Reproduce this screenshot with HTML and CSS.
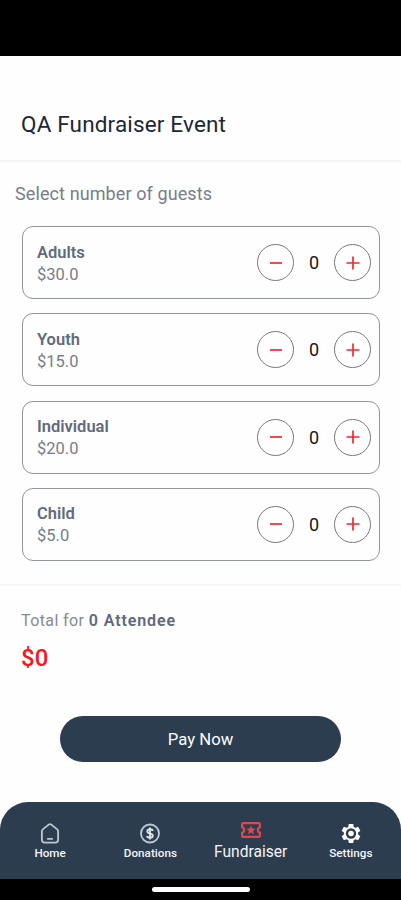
FILE: index.html
```html
<!DOCTYPE html>
<html lang="en">
<head>
    <meta charset="UTF-8">
    <meta name="viewport" content="width=device-width, initial-scale=1.0">
    <title>QA Fundraiser Event</title>
    <link rel="stylesheet" href="styles.css">
</head>

<body>
    <div class="status-bar"></div>
    <header class="header">
        <h1>QA Fundraiser Event</h1>
    </header>

    <main class="guests">
        <h2>Select number of guests</h2>
        <div class="guest-list">
            <div class="card">
                <div class="info">
                    <span class="name">Adults</span>
                    <span class="price">$30.0</span>
                </div>
                <button class="round" aria-label="Remove"><svg viewBox="0 0 14 14"><path d="M1 7h12"/></svg></button>
                <span class="count">0</span>
                <button class="round" aria-label="Add"><svg viewBox="0 0 14 14"><path d="M.5 7h13M7 .5v13"/></svg></button>
            </div>
            <div class="card">
                <div class="info">
                    <span class="name">Youth</span>
                    <span class="price">$15.0</span>
                </div>
                <button class="round" aria-label="Remove"><svg viewBox="0 0 14 14"><path d="M1 7h12"/></svg></button>
                <span class="count">0</span>
                <button class="round" aria-label="Add"><svg viewBox="0 0 14 14"><path d="M.5 7h13M7 .5v13"/></svg></button>
            </div>
            <div class="card">
                <div class="info">
                    <span class="name">Individual</span>
                    <span class="price">$20.0</span>
                </div>
                <button class="round" aria-label="Remove"><svg viewBox="0 0 14 14"><path d="M1 7h12"/></svg></button>
                <span class="count">0</span>
                <button class="round" aria-label="Add"><svg viewBox="0 0 14 14"><path d="M.5 7h13M7 .5v13"/></svg></button>
            </div>
            <div class="card">
                <div class="info">
                    <span class="name">Child</span>
                    <span class="price">$5.0</span>
                </div>
                <button class="round" aria-label="Remove"><svg viewBox="0 0 14 14"><path d="M1 7h12"/></svg></button>
                <span class="count">0</span>
                <button class="round" aria-label="Add"><svg viewBox="0 0 14 14"><path d="M.5 7h13M7 .5v13"/></svg></button>
            </div>
        </div>
    </main>

    <section class="total">
        <p class="attendees">Total for <b>0 Attendee</b></p>
        <p class="amount">$0</p>
        <button class="pay">Pay Now</button>
    </section>

    <nav class="tabs">
        <a class="tab">
            <svg class="icon home" viewBox="0 0 20 22">
                <path d="M1.5 8.8Q1.5 7.3 2.7 6.4L8.6 1.7Q10 .7 11.4 1.7L17.3 6.4Q18.5 7.3 18.5 8.8V17.5Q18.5 20.5 15.5 20.5H4.5Q1.5 20.5 1.5 17.5ZM7 16.7h6"/>
            </svg>
            <span>Home</span>
        </a>
        <a class="tab">
            <svg class="icon coin" viewBox="0 0 20 20">
                <circle cx="10" cy="10" r="9"/>
                <path class="sign" d="M12.8 7.5Q12.4 5.8 10 5.8T7.3 7.8Q7.3 9.4 10 10T12.8 12.2Q12.8 14.2 10 14.2T7.1 12.4M10 4v12"/>
            </svg>
            <span>Donations</span>
        </a>
        <a class="tab active">
            <svg class="icon ticket" viewBox="0 0 20 16">
                <path d="M2.2 1.1H17.8Q18.9 1.1 18.9 2.2V5.3A2.8 2.8 0 0 0 18.9 10.7V13.8Q18.9 14.9 17.8 14.9H2.2Q1.1 14.9 1.1 13.8V10.7A2.8 2.8 0 0 0 1.1 5.3V2.2Q1.1 1.1 2.2 1.1Z"/>
                <path class="star" d="M10 3.4l1.3 3 3.3.3-2.5 2.2.8 3.3L10 10.5l-2.9 1.7.8-3.3-2.5-2.2 3.3-.3z"/>
            </svg>
            <span>Fundraiser</span>
        </a>
        <a class="tab">
            <svg class="icon gear" viewBox="1.5 1.5 21 21">
                <path d="M19.43 12.98c.04-.32.07-.64.07-.98s-.03-.66-.07-.98l2.11-1.65c.19-.15.24-.42.12-.64l-2-3.46c-.12-.22-.39-.3-.61-.22l-2.49 1c-.52-.4-1.08-.73-1.69-.98l-.38-2.65C14.46 2.18 14.25 2 14 2h-4c-.25 0-.46.18-.49.42l-.38 2.65c-.61.25-1.17.59-1.69.98l-2.49-1c-.23-.09-.49 0-.61.22l-2 3.46c-.13.22-.07.49.12.64l2.11 1.65c-.04.32-.07.65-.07.98s.03.66.07.98l-2.11 1.65c-.19.15-.24.42-.12.64l2 3.46c.12.22.39.3.61.22l2.49-1c.52.4 1.08.73 1.69.98l.38 2.65c.03.24.24.42.49.42h4c.25 0 .46-.18.49-.42l.38-2.65c.61-.25 1.17-.59 1.69-.98l2.49 1c.23.09.49 0 .61-.22l2-3.46c.12-.22.07-.49-.12-.64z"/>
                <circle class="hole" cx="12" cy="12" r="5.4"/>
                <circle cx="12" cy="12" r="2.9"/>
            </svg>
            <span>Settings</span>
        </a>
    </nav>
    <div class="system-bar"><div class="handle"></div></div>
</body>
</html>
```

FILE: styles.css
```css
* {
    box-sizing: border-box;
}
body {
    margin: 0;
    height: 900px;
    display: flex;
    flex-direction: column;
    background-color: #fefefe;
    font-family: Roboto, "Liberation Sans", sans-serif;
    color: #69707f;
}
h1, h2, p {
    margin: 0;
    font-weight: 400;
}
button {
    font-family: inherit;
    padding: 0;
}
.status-bar {
    height: 56px;
    background-color: #000;
}
.header {
    height: 106px;
    padding: 52px 21px 0;
    border-bottom: 2px solid #f5f5f6;
}
h1 {
    font-size: 22.5px;
    line-height: 32px;
    letter-spacing: .16px;
    color: #202638;
}
.guests {
    height: 424px;
    padding: 20px 21px 0 22px;
    border-bottom: 2px solid #f7f7f8;
}
h2 {
    margin-left: -7px;
    font-size: 18px;
    line-height: 24px;
    letter-spacing: .1px;
    color: #777d8c;
}
.guest-list {
    display: flex;
    flex-direction: column;
    gap: 14.25px;
    margin-top: 20px;
}
.card {
    display: flex;
    align-items: center;
    height: 73px;
    padding: 0 8px 0 14px;
    border: 1px solid #929599;
    border-radius: 11px;
}
.info {
    flex: 1;
    display: flex;
    flex-direction: column;
    padding-top: 2px;
    font-size: 16.5px;
    line-height: 22px;
}
.name {
    font-weight: 600;
    color: #626a7c;
}
.price {
    color: #777d89;
}
.round {
    display: flex;
    align-items: center;
    justify-content: center;
    width: 37px;
    height: 37px;
    border: 1px solid #77797c;
    border-radius: 50%;
    background: none;
}
.round svg {
    width: 14px;
    height: 14px;
    fill: none;
    stroke: #f8262e;
    stroke-width: 1.7;
}
.count {
    width: 40px;
    text-align: center;
    font-size: 18px;
    color: #15171a;
}
.total {
    flex: 1;
    padding: 24px 21px 0;
}
.attendees {
    font-size: 16px;
    line-height: 22px;
    letter-spacing: .4px;
    color: #858a95;
}
.attendees b {
    font-weight: 600;
    letter-spacing: .9px;
    color: #5f687b;
}
.amount {
    margin-top: 10px;
    font-size: 24px;
    line-height: 32px;
    font-weight: 500;
    color: #fb161b;
}
.pay {
    display: block;
    width: 281px;
    height: 46px;
    margin: 42px auto 0;
    border: none;
    border-radius: 23px;
    background-color: #2c3d50;
    color: #fff;
    font-size: 16.7px;
}
.tabs {
    display: flex;
    height: 77px;
    border-radius: 28px 28px 0 0;
    background-color: #2c3d50;
}
.tab {
    flex: 1;
    display: flex;
    flex-direction: column;
    align-items: center;
    padding-top: 21px;
    color: #f3f5f7;
    font-size: 11.7px;
    line-height: 14px;
    font-weight: 500;
}
.tab span {
    margin-top: 2px;
}
.icon {
    width: 20px;
    height: 21px;
    fill: none;
    stroke: #bdc8d3;
    stroke-width: 1.9;
}
.coin .sign {
    stroke: #dce3e9;
}
.active {
    padding-top: 20px;
    font-size: 15.6px;
    line-height: 18px;
    font-weight: 400;
}
.active span {
    margin-top: 5px;
}
.ticket {
    height: 16px;
    stroke: #df4752;
    stroke-width: 2.2;
}
.ticket .star {
    fill: #df4752;
    stroke: none;
}
.gear {
    fill: #fff;
    stroke: none;
}
.gear .hole {
    fill: #2c3d50;
}
.system-bar {
    display: flex;
    justify-content: center;
    height: 21px;
    padding-top: 8px;
    background-color: #000;
}
.handle {
    width: 98px;
    height: 5px;
    border-radius: 3px;
    background-color: #fff;
}
```
